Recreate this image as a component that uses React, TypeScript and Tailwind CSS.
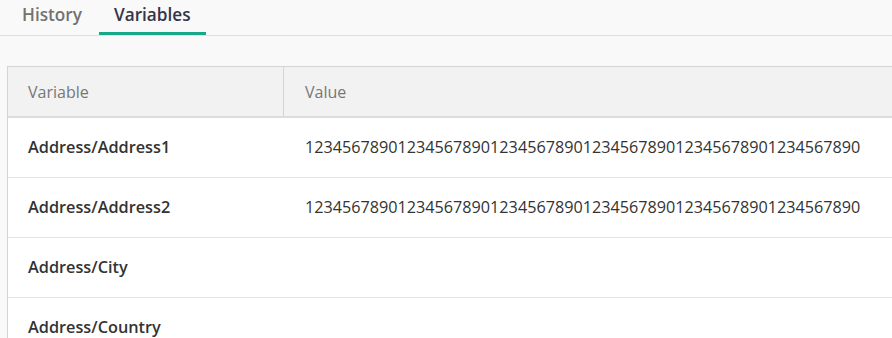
const rows = [
  { name: "Address/Address1", value: "123456789012345678901234567890123456789012345678901234567890" },
  { name: "Address/Address2", value: "123456789012345678901234567890123456789012345678901234567890" },
  { name: "Address/City", value: "" },
  { name: "Address/Country", value: "" },
];

export default function App() {
  return (
    <div className="h-[338px] overflow-hidden bg-[#f9f9f9] font-['Open_Sans',sans-serif]">
      <div className="flex h-9 border-b border-[#e0e0e0] pl-[7px]">
        <button
          type="button"
          className="h-[35px] px-[15px] pb-[5px] text-[17.2px] font-semibold text-[#727272]"
        >
          History
        </button>
        <button
          type="button"
          className="ml-[2px] h-[35px] border-b-[3px] border-[#16a888] px-[15px] pb-[2px] text-[17.2px] font-semibold text-[#34344a]"
        >
          Variables
        </button>
      </div>

      <div className="pl-[7px] pt-[30px]">
        <div className="border-l border-t border-[#d4d4d4] bg-white">
          <div className="flex h-[51px] items-center border-b-2 border-[#dcdcdc] bg-[#f2f2f2] text-[16px] text-[#777]">
            <div className="flex h-full w-[276px] items-center border-r border-[#d4d4d4] pl-[20px]">
              Variable
            </div>
            <div className="pl-[21px]">Value</div>
          </div>
          {rows.map((row) => (
            <div
              key={row.name}
              className="flex h-[60px] items-center border-b border-[#e3e3e3] pb-[1px] text-[#333]"
            >
              <div className="w-[276px] pl-[20px] text-[16.3px] font-semibold">{row.name}</div>
              <div className="pl-[21px] text-[16.2px]">{row.value}</div>
            </div>
          ))}
        </div>
      </div>
    </div>
  );
}
